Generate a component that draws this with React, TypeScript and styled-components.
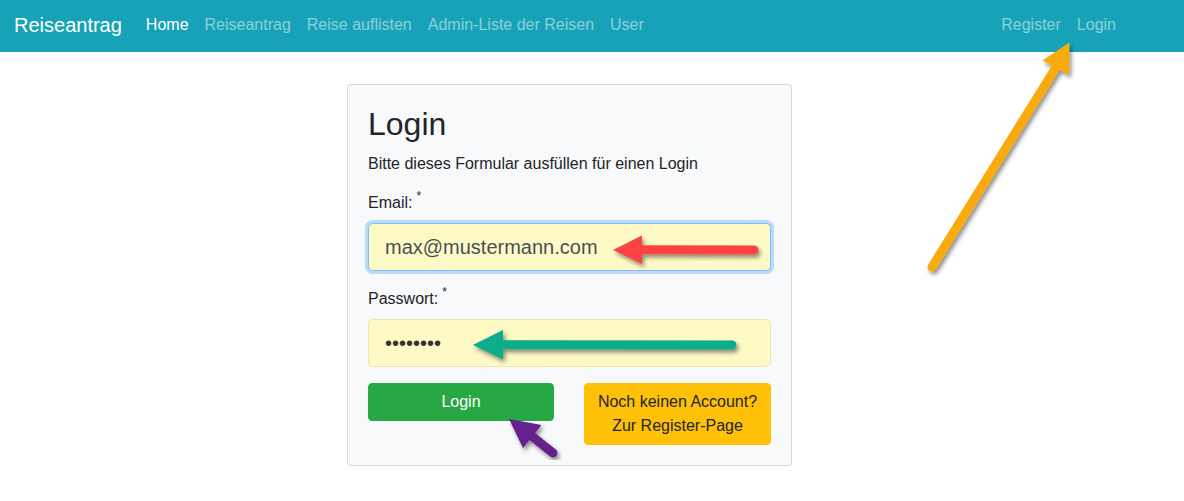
import React from "react";
import styled, { createGlobalStyle } from "styled-components";

const Global = createGlobalStyle`
  html, body { margin: 0; padding: 0; background: #fff; }
  body {
    font-family: "Liberation Sans", Arial, sans-serif;
    font-size: 16px;
    line-height: 1.5;
    color: #212529;
  }
  * { box-sizing: border-box; }
`;

const Page = styled.div`
  position: relative;
  width: 1184px;
  height: 501px;
  overflow: hidden;
`;

const Navbar = styled.nav`
  height: 52px;
  background: #17a2b8;
  display: flex;
  align-items: center;
  padding: 0 16px 2px 14px;
`;

const Brand = styled.a`
  font-size: 20px;
  line-height: 30px;
  padding: 5px 0;
  margin-right: 16px;
  color: #fff;
  text-decoration: none;
`;

const NavList = styled.div<{ $end?: boolean }>`
  display: flex;
  align-items: center;
  margin-right: ${(p) => (p.$end ? "44px" : "0")};
  margin-left: ${(p) => (p.$end ? "auto" : "0")};
`;

const NavLink = styled.a<{ $active?: boolean }>`
  padding: 8px;
  line-height: 24px;
  font-size: 16px;
  text-decoration: none;
  color: ${(p) => (p.$active ? "#fff" : "rgba(255,255,255,0.5)")};
`;

const Main = styled.main`
  padding: 32px 0 0 347px;
`;

const Card = styled.div`
  width: 445px;
  background: #f8f9fa;
  border: 1px solid rgba(0, 0, 0, 0.125);
  border-radius: 4px;
  padding: 20px;
`;

const Title = styled.h2`
  margin: 0 0 9px;
  font-size: 32px;
  line-height: 38.4px;
  font-weight: 500;
`;

const Lead = styled.p`
  margin: 0 0 15px;
`;

const Group = styled.div`
  margin-bottom: 16px;
`;

const Label = styled.label`
  display: block;
  margin-bottom: 8px;
  line-height: 24px;
  height: 24px;
`;

const Required = styled.sup`
  font-size: 12px;
  line-height: 0;
  vertical-align: baseline;
  position: relative;
  top: -8px;
  margin-left: 4px;
`;

const Input = styled.input<{ $focus?: boolean }>`
  display: block;
  width: 100%;
  height: 48px;
  padding: 8px 16px;
  font-family: "Liberation Sans", Arial, sans-serif;
  font-size: 20px;
  line-height: 30px;
  color: #495057;
  background: #fdfac6;
  border: 1px solid ${(p) => (p.$focus ? "#80bdff" : "#f1e3ae")};
  border-radius: 4.8px;
  outline: none;
  box-shadow: ${(p) => (p.$focus ? "0 0 0 3px rgba(0,123,255,0.25)" : "none")};
  &[type="password"] {
    color: #333;
  }
`;

const ButtonRow = styled.div`
  display: grid;
  grid-template-columns: 186px 187px;
  justify-content: space-between;
  align-items: start;
`;

const Button = styled.button<{ $variant: "success" | "warning" }>`
  font-family: "Liberation Sans", Arial, sans-serif;
  font-size: 16px;
  line-height: 24px;
  padding: 6px 12px;
  border-radius: 4px;
  border: 1px solid ${(p) => (p.$variant === "success" ? "#28a745" : "#ffc107")};
  background: ${(p) => (p.$variant === "success" ? "#28a745" : "#ffc107")};
  color: ${(p) => (p.$variant === "success" ? "#fff" : "#212529")};
  text-align: center;
`;

const Overlay = styled.svg`
  position: absolute;
  top: 0;
  left: 0;
  pointer-events: none;
`;

function Arrow({
  color,
  tail,
  tip,
  wings,
}: {
  color: string;
  tail: [number, number];
  tip: [number, number];
  wings: [[number, number], [number, number]];
}) {
  const base: [number, number] = [
    (wings[0][0] + wings[1][0]) / 2,
    (wings[0][1] + wings[1][1]) / 2,
  ];
  return (
    <g filter="url(#shadow)">
      <line
        x1={tail[0]}
        y1={tail[1]}
        x2={base[0]}
        y2={base[1]}
        stroke={color}
        strokeWidth={9}
        strokeLinecap="round"
      />
      <polygon
        points={`${tip[0]},${tip[1]} ${wings[0][0]},${wings[0][1]} ${wings[1][0]},${wings[1][1]}`}
        fill={color}
      />
    </g>
  );
}

export default function App() {
  return (
    <Page>
      <Global />
      <Navbar>
        <Brand>Reiseantrag</Brand>
        <NavList>
          <NavLink $active>Home</NavLink>
          <NavLink>Reiseantrag</NavLink>
          <NavLink>Reise auflisten</NavLink>
          <NavLink>Admin-Liste der Reisen</NavLink>
          <NavLink>User</NavLink>
        </NavList>
        <NavList $end>
          <NavLink>Register</NavLink>
          <NavLink>Login</NavLink>
        </NavList>
      </Navbar>
      <Main>
        <Card>
          <Title>Login</Title>
          <Lead>Bitte dieses Formular ausfüllen für einen Login</Lead>
          <Group>
            <Label>
              Email:<Required>*</Required>
            </Label>
            <Input $focus type="text" readOnly value="max@mustermann.com" />
          </Group>
          <Group>
            <Label>
              Passwort:<Required>*</Required>
            </Label>
            <Input type="password" readOnly value="12345678" />
          </Group>
          <ButtonRow>
            <Button $variant="success">Login</Button>
            <Button $variant="warning">
              Noch keinen Account?
              <br />
              Zur Register-Page
            </Button>
          </ButtonRow>
        </Card>
      </Main>
      <Overlay width={1184} height={501} viewBox="0 0 1184 501">
        <defs>
          <filter id="shadow" x="-20%" y="-20%" width="140%" height="140%">
            <feDropShadow dx="2" dy="3" stdDeviation="2" floodColor="#000" floodOpacity="0.45" />
          </filter>
        </defs>
        <Arrow color="#fc4343" tail={[754, 250]} tip={[613, 250]} wings={[[642, 235.5], [642, 264]]} />
        <Arrow color="#08ad8c" tail={[732, 345]} tip={[473, 345]} wings={[[503, 330], [503, 359.5]]} />
        <Arrow color="#65228d" tail={[553, 453]} tip={[509, 419]} wings={[[541.5, 425], [523, 448]]} />
        <Arrow color="#f9ab0b" tail={[932, 267]} tip={[1069.5, 42.5]} wings={[[1042.5, 60.5], [1069, 75]]} />
      </Overlay>
    </Page>
  );
}
